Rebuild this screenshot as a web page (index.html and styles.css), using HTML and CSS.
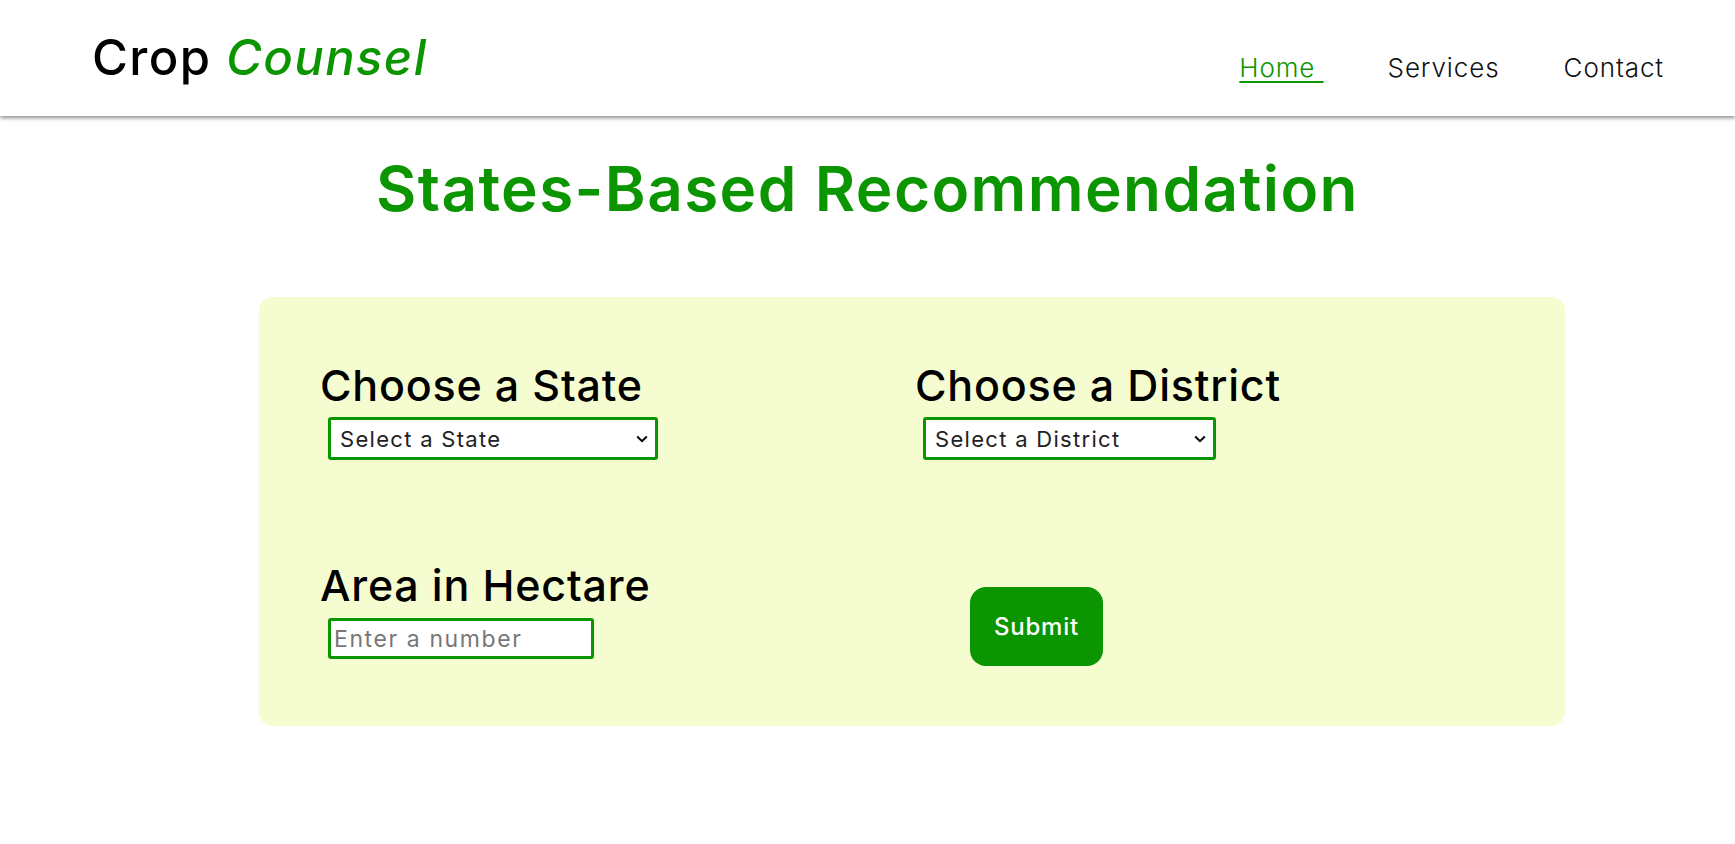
FILE: index.html
```html
<!DOCTYPE html>
<html lang="en">
<head>
<meta charset="utf-8">
<title>Crop Counsel</title>
<link rel="stylesheet" href="styles.css">
</head>
<body>
<header class="site-header">
  <div class="logo">Crop <span class="logo-accent">Counsel</span></div>
  <nav class="nav">
    <a class="nav-link active" href="#">Home </a>
    <a class="nav-link" href="#">Services</a>
    <a class="nav-link" href="#">Contact</a>
  </nav>
</header>
<main class="main">
  <h1 class="title">States-Based Recommendation</h1>
  <form class="card">
    <div class="field">
      <label class="label" for="state">Choose a State</label>
      <div class="select-wrap select-state">
        <select id="state" class="select">
          <option>Select a State</option>
        </select>
        <svg class="chevron" width="12" height="8" viewBox="0 0 12 8"><path d="M1.2 1.5 L6 6.2 L10.8 1.5" fill="none" stroke="#000" stroke-width="2"/></svg>
      </div>
    </div>
    <div class="field">
      <label class="label" for="district">Choose a District</label>
      <div class="select-wrap select-district">
        <select id="district" class="select">
          <option>Select a District</option>
        </select>
        <svg class="chevron" width="12" height="8" viewBox="0 0 12 8"><path d="M1.2 1.5 L6 6.2 L10.8 1.5" fill="none" stroke="#000" stroke-width="2"/></svg>
      </div>
    </div>
    <div class="field">
      <label class="label" for="area">Area in Hectare</label>
      <input id="area" class="input" type="number" placeholder="Enter a number">
    </div>
    <div class="field submit-cell">
      <button type="button" class="submit">Submit</button>
    </div>
  </form>
</main>
</body>
</html>
```

FILE: styles.css
```css
* { box-sizing: border-box; }
html, body { margin: 0; padding: 0; }
body {
  font-family: Inter, "Open Sans", sans-serif;
  background: #ffffff;
  color: #000;
}
.site-header {
  height: 116px;
  display: flex;
  justify-content: space-between;
  align-items: flex-start;
  padding: 0 71px 0 92px;
  box-shadow: 0 2px 4px rgba(0,0,0,0.45);
  background: #fff;
}
.logo {
  font-size: 49px;
  font-weight: 500;
  letter-spacing: 1.4px;
  margin-top: 28px;
}
.logo-accent {
  color: #0b9500;
  font-style: italic;
}
.nav {
  display: flex;
  gap: 64px;
  margin-top: 52px;
}
.nav-link {
  font-size: 26px;
  font-weight: 300;
  color: #111;
  text-decoration: none;
  letter-spacing: 0.9px;
}
.nav-link.active {
  color: #0b9500;
  text-decoration: underline;
  text-underline-offset: 4px;
  text-decoration-thickness: 2px;
  white-space: pre;
}
.main { padding-top: 1px; }
.title {
  margin: 34px 0 0;
  text-align: center;
  color: #0b9500;
  font-size: 62px;
  font-weight: 600;
  letter-spacing: 1.4px;
}
.card {
  margin: 71px 0 0 259px;
  width: 1306px;
  height: 429px;
  background: #f5fdd0;
  border-radius: 14px;
  display: grid;
  grid-template-columns: 595px 1fr;
  grid-template-rows: 200px 1fr;
  padding: 65px 0 0 61px;
}
.field {
  display: flex;
  flex-direction: column;
  align-items: flex-start;
}
.label {
  font-size: 43px;
  font-weight: 500;
  letter-spacing: 0.8px;
  line-height: 46px;
}
.select-wrap {
  position: relative;
  margin: 9px 0 0 8px;
  height: 43px;
}
.select-state { width: 330px; }
.select-district { width: 293px; }
.select {
  appearance: none;
  -webkit-appearance: none;
  width: 100%;
  height: 43px;
  border: 3px solid #0b9500;
  border-radius: 3px;
  background: #fff;
  font-family: inherit;
  font-size: 22px;
  font-weight: 400;
  letter-spacing: 1.3px;
  color: #222;
  padding: 0 30px 0 9px;
}
.chevron {
  position: absolute;
  right: 10px;
  top: 18px;
  pointer-events: none;
}
.input {
  margin: 10px 0 0 8px;
  width: 266px;
  height: 41px;
  border: 3px solid #0b9500;
  border-radius: 3px;
  background: #fff;
  font-family: inherit;
  font-size: 23px;
  letter-spacing: 1.6px;
  padding: 0 3px;
}
.input::placeholder { color: #777; }
.submit-cell { padding: 25px 0 0 55px; }
.submit {
  width: 133px;
  height: 79px;
  border: none;
  border-radius: 16px;
  background: #0b9500;
  color: #fff;
  font-family: inherit;
  font-size: 24px;
  font-weight: 500;
  letter-spacing: 0.8px;
}
```
